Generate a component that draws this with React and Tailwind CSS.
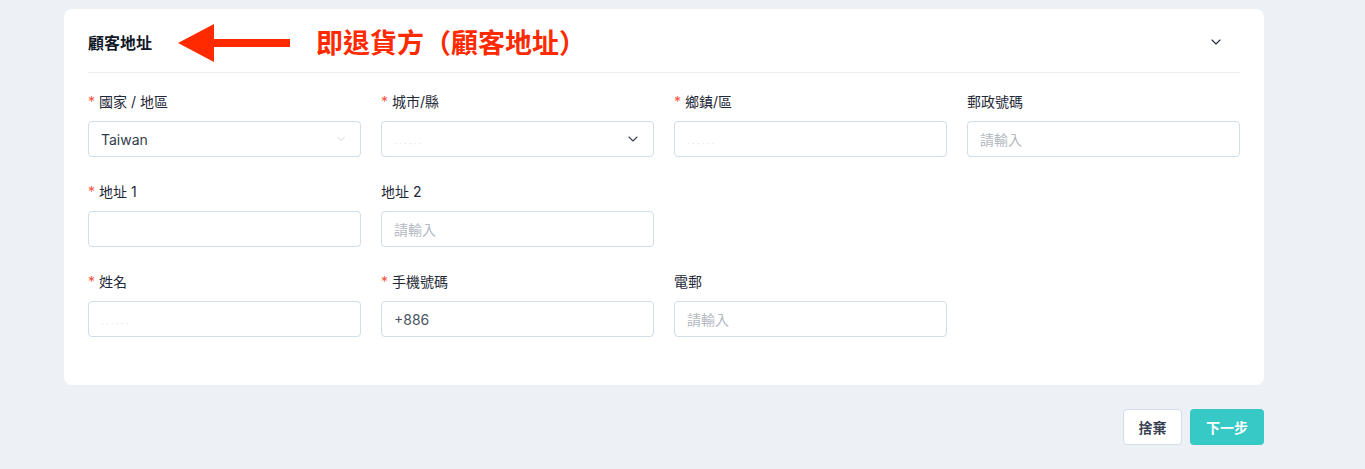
import { ChevronDown } from 'lucide-react'

const font = { fontFamily: '"Inter", "Noto Sans CJK TC", sans-serif' }

function Label({ text, required }) {
  return (
    <div className="h-5 flex items-center text-[14px] text-[#1f2937] mb-[10px]">
      {required && <span className="text-[#f5533d] mr-1">*</span>}
      <span>{text}</span>
    </div>
  )
}

function Field({ label, required, children }) {
  return (
    <div className="w-[273px]">
      <Label text={label} required={required} />
      {children}
    </div>
  )
}

function Box({ children, className = '' }) {
  return (
    <div className={`h-9 w-full rounded-[4px] border border-[#d3ddea] bg-white flex items-center px-3 text-[14px] ${className}`}>
      {children}
    </div>
  )
}

function Blur() {
  return <span className="text-[10px] tracking-[2px] text-[#e4e7ec] mt-2">······</span>
}

export default function App() {
  return (
    <div className="min-h-[469px] bg-[#edf0f5] px-16 pt-[9px]" style={font}>
      <div className="w-[1200px] bg-white rounded-lg px-6 pb-12">
        {/* Header */}
        <div className="h-[64px] flex items-center border-b border-[#eceef3] relative">
          <span className="w-[64px] text-[16px] font-bold text-[#111827] mt-1 whitespace-nowrap">顧客地址</span>
          <svg className="ml-[26px] mt-1" width="112" height="38" viewBox="0 0 112 38">
            <polygon points="0,19 36,0 36,15 112,15 112,23 36,23 36,38" fill="#ff2a00" />
          </svg>
          <span className="ml-[26px] text-[27px] font-bold text-[#ff2a00] mt-1" style={{ fontFamily: '"Noto Sans CJK TC", sans-serif' }}>
            即退貨方（顧客地址）
          </span>
          <ChevronDown className="absolute right-[16px] top-[25px] text-[#1f2937]" size={16} strokeWidth={1.6} />
        </div>

        <div className="pt-[18px] flex flex-col gap-[24px]">
          <div className="flex gap-5">
            <Field label="國家 / 地區" required>
              <Box className="justify-between">
                <span className="text-[#333c4d]">Taiwan</span>
                <ChevronDown size={14} strokeWidth={1.2} className="text-[#c0c6cf]" />
              </Box>
            </Field>
            <Field label="城市/縣" required>
              <Box className="justify-between">
                <Blur />
                <ChevronDown size={16} strokeWidth={1.6} className="text-[#374151]" />
              </Box>
            </Field>
            <Field label="鄉鎮/區" required>
              <Box><Blur /></Box>
            </Field>
            <Field label="郵政號碼">
              <Box><span className="text-[#b3b8c1]">請輸入</span></Box>
            </Field>
          </div>

          <div className="flex gap-5">
            <Field label="地址 1" required>
              <Box />
            </Field>
            <Field label="地址 2">
              <Box><span className="text-[#b3b8c1]">請輸入</span></Box>
            </Field>
          </div>

          <div className="flex gap-5">
            <Field label="姓名" required>
              <Box><Blur /></Box>
            </Field>
            <Field label="手機號碼" required>
              <Box><span className="text-[#4b5563]">+886</span></Box>
            </Field>
            <Field label="電郵">
              <Box><span className="text-[#b3b8c1]">請輸入</span></Box>
            </Field>
          </div>
        </div>
      </div>

      <div className="w-[1200px] flex justify-end gap-2 mt-6">
        <button className="h-9 w-[59px] rounded-[4px] border border-[#d3ddea] bg-white text-[14px] font-bold text-[#374151]">
          捨棄
        </button>
        <button className="h-9 w-[74px] rounded-[4px] bg-[#36c9c6] text-[14px] font-bold text-white">
          下一步
        </button>
      </div>
    </div>
  )
}
